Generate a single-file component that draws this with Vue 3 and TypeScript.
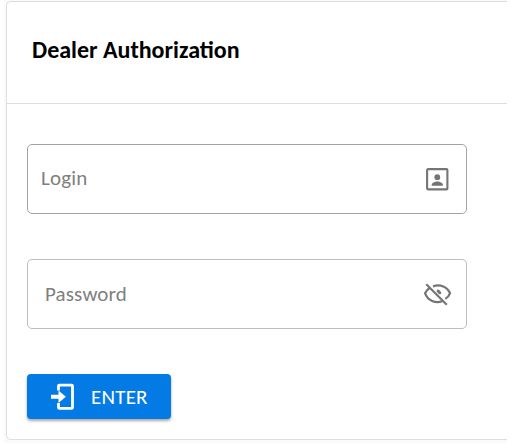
<script setup lang="ts">
import { ref } from 'vue'

const login = ref('')
const password = ref('')
</script>

<template>
  <main class="page">
    <section class="card">
      <header class="card-header">
        <h1 class="title">Dealer Authorization</h1>
      </header>
      <form class="form" @submit.prevent>
        <label class="field field-login">
          <input v-model="login" class="input" type="text" placeholder="Login" />
          <svg class="icon" viewBox="0 0 28 28" fill="none">
            <rect x="3.1" y="4.1" width="20.3" height="20.3" rx="1" stroke="#757575" stroke-width="2.1" />
            <circle cx="13.3" cy="12.2" r="2.9" fill="#757575" />
            <path d="M7.7 20.8v-1c0-2 3.5-3.3 5.6-3.3s5.6 1.3 5.6 3.3v1z" fill="#757575" />
          </svg>
        </label>
        <label class="field field-password">
          <input v-model="password" class="input" type="password" placeholder="Password" />
          <svg class="icon" viewBox="0 0 28 28" fill="none" stroke="#757575" stroke-width="2.2">
            <path d="M9 6.4C16 3.6 23.6 7 26 13.3c-.9 2.4-2.5 4.3-4.7 5.6" />
            <path d="M6 7.8C3.7 9.2 2.1 11 1.1 13.3 3.7 20.5 11.5 24 18.6 20.9" />
            <path d="M12.8 10.9c2 0 3 1.200 3.200 3.200" stroke-width="2.600" />
            <path d="M2.3 4.3 22.8 24.8" />
          </svg>
        </label>
        <button class="enter" type="submit">
          <svg class="enter-icon" viewBox="0 0 26 28" fill="none">
            <path d="M8.500 7.500V3.100q0-1 1-1h12q1 0 1 1v21.300q0 1-1 1h-12q-1 0-1-1V20" stroke="#fff" stroke-width="2.800" />
            <path d="M1 11.800h7.500V7.600l7.300 6.200-7.300 6.200V15.800H1z" fill="#fff" />
          </svg>
          <span class="enter-label">ENTER</span>
        </button>
      </form>
    </section>
  </main>
</template>

<style>
body {
  background: #fff;
}
</style>

<style scoped>
.page {
  box-sizing: border-box;
  width: 503px;
  height: 443px;
  margin-left: 4px;
  padding: 1px 0 3px 2px;
  background: #fafafa;
  overflow: hidden;
  font-family: Carlito, Calibri, Lato, sans-serif;
}
.card {
  box-sizing: border-box;
  height: 439px;
  border: 1px solid #dedede;
  border-right: 0;
  border-radius: 5px 0 0 5px;
  background: #fff;
}
.card-header {
  box-sizing: border-box;
  height: 102px;
  display: flex;
  align-items: center;
  padding: 0 25px 5px;
  border-bottom: 1px solid #dedede;
}
.title {
  margin: 0;
  font-size: 24px;
  line-height: 30px;
  font-weight: 700;
  color: #000;
  white-space: nowrap;
}
.form {
  display: flex;
  flex-direction: column;
  align-items: flex-start;
  padding: 40px 20px 0;
}
.field {
  box-sizing: border-box;
  width: 440px;
  height: 70px;
  display: flex;
  align-items: center;
  border: 1px solid #a3a3a3;
  border-radius: 5px;
  padding-right: 14px;
}
.field-login {
  padding-left: 13px;
}
.field-login .input {
  padding-bottom: 2px;
}
.field-password {
  margin-top: 45px;
  padding-left: 17px;
  border-color: #bdbdbd;
}
.input {
  flex: 1;
  min-width: 0;
  padding: 0;
  border: 0;
  outline: 0;
  background: transparent;
  font-family: inherit;
  font-size: 21px;
  line-height: 28px;
  letter-spacing: 0.15px;
  color: #333;
}
.input::placeholder {
  color: #808080;
  opacity: 1;
}
.icon {
  width: 28px;
  height: 28px;
  flex: none;
}
.enter {
  box-sizing: border-box;
  width: 144px;
  height: 45px;
  margin-top: 45px;
  padding: 0 0 0 23px;
  display: flex;
  align-items: center;
  border: 0;
  border-radius: 4px;
  background: #047be4;
  color: #fff;
  font-family: inherit;
  box-shadow: 0 2px 3px rgba(0, 0, 0, 0.35);
}
.enter-icon {
  width: 26px;
  height: 28px;
  flex: none;
}
.enter-label {
  margin-left: 15px;
  font-size: 21px;
  line-height: 28px;
  letter-spacing: 0.2px;
}
</style>
